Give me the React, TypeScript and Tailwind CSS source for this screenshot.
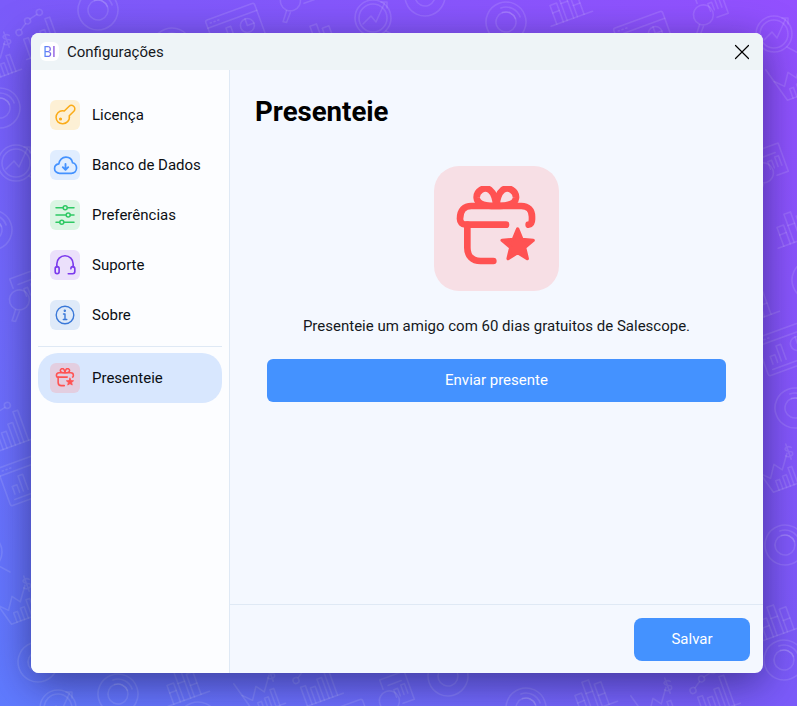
import React from "react";
import { X } from "lucide-react";

function PatternIcon({ kind }: { kind: string }) {
  if (kind === "bars") {
    return (
      <>
        <path d="M2 44H46" />
        <path d="M8 44V24H15V44M19 44V14H26V44M30 44V20H37V44" />
        <path d="M8 32H15M19 26H26M30 32H37" />
      </>
    );
  }
  if (kind === "barsLine") {
    return (
      <>
        <path d="M4 46H46" />
        <path d="M8 46V26H13V46M17 46V30H22V46M26 46V24H31V46M35 46V14H40V46" />
        <circle cx="6" cy="18" r="3" />
        <circle cx="18" cy="10" r="3" />
        <circle cx="32" cy="6" r="3" />
        <path d="M9 16L15 12M21 9L29 7" />
      </>
    );
  }
  if (kind === "donut") {
    return (
      <>
        <circle cx="24" cy="24" r="20" />
        <circle cx="24" cy="24" r="10" />
        <path d="M24 9A15 15 0 0 1 39 24M24 14A10 10 0 0 1 34 24" />
      </>
    );
  }
  if (kind === "browser") {
    return (
      <>
        <rect x="2" y="6" width="52" height="40" rx="2" />
        <path d="M2 14H54M6 10H7M10 10H11M14 10H15" />
        <path d="M10 36V28H15V36M19 36V20H24V36" />
        <circle cx="40" cy="25" r="7" />
        <path d="M40 18V25H47M8 41H48" />
      </>
    );
  }
  if (kind === "radar") {
    return (
      <>
        <circle cx="22" cy="24" r="18" />
        <circle cx="22" cy="24" r="14" />
        <path d="M12 30L20 22L25 28L34 8M30 8H36V14" />
        <path d="M35 37L48 44" />
      </>
    );
  }
  if (kind === "lens") {
    return (
      <>
        <path d="M16 14V4H42V34H30" />
        <path d="M22 12H36M26 26V18H30V26M34 26V16H38V26" />
        <circle cx="18" cy="27" r="10" />
        <path d="M11 35L4 44L7 46L14 38" />
      </>
    );
  }
  return (
    <>
      <path d="M4 8L14 44H46" />
      <path d="M8 22L16 30L24 18L30 26L40 12" />
      <path d="M20 44V34H24V44M28 44V32H32V44M36 44V26H40V44" />
      <path d="M46 8C44 5 38 6 40 9C42 12 47 11 45 15C43 17 39 16 38 14M42 3V19" />
    </>
  );
}

const patternItems = [
  { kind: "barsLine", x: 38, y: 32, r: -20 },
  { kind: "donut", x: 98, y: 10, r: -20 },
  { kind: "donut", x: 172, y: 48, r: -20 },
  { kind: "browser", x: 232, y: 30, r: -20 },
  { kind: "lens", x: 295, y: -4, r: -20 },
  { kind: "bars", x: 318, y: 34, r: -20 },
  { kind: "radar", x: 375, y: 18, r: 0 },
  { kind: "donut", x: 425, y: -4, r: -20 },
  { kind: "donut", x: 506, y: 22, r: -20 },
  { kind: "bars", x: 565, y: 0, r: -20 },
  { kind: "browser", x: 640, y: 38, r: -20 },
  { kind: "lens", x: 708, y: 10, r: -20 },
  { kind: "radar", x: 776, y: 34, r: 0 },
  { kind: "chart", x: -6, y: 58, r: -20 },
  { kind: "donut", x: 0, y: 108, r: -20 },
  { kind: "radar", x: 18, y: 163, r: 0 },
  { kind: "donut", x: -8, y: 230, r: -20 },
  { kind: "lens", x: 24, y: 295, r: -20 },
  { kind: "barsLine", x: 6, y: 425, r: -20 },
  { kind: "browser", x: 24, y: 478, r: -20 },
  { kind: "radar", x: -14, y: 552, r: 0 },
  { kind: "chart", x: 14, y: 602, r: -20 },
  { kind: "donut", x: 38, y: 662, r: -20 },
  { kind: "chart", x: 790, y: 78, r: -20 },
  { kind: "lens", x: 768, y: 168, r: -20 },
  { kind: "bars", x: 792, y: 222, r: -20 },
  { kind: "donut", x: 812, y: 280, r: -20 },
  { kind: "bars", x: 752, y: 300, r: -20 },
  { kind: "browser", x: 782, y: 348, r: -20 },
  { kind: "donut", x: 795, y: 408, r: -20 },
  { kind: "chart", x: 776, y: 470, r: -20 },
  { kind: "donut", x: 785, y: 545, r: -20 },
  { kind: "bars", x: 775, y: 615, r: -20 },
  { kind: "donut", x: 784, y: 660, r: -20 },
  { kind: "radar", x: 60, y: 708, r: 0 },
  { kind: "donut", x: 118, y: 694, r: -20 },
  { kind: "bars", x: 182, y: 680, r: -20 },
  { kind: "donut", x: 198, y: 722, r: -20 },
  { kind: "chart", x: 258, y: 692, r: -20 },
  { kind: "barsLine", x: 315, y: 680, r: -20 },
  { kind: "browser", x: 340, y: 726, r: -20 },
  { kind: "lens", x: 394, y: 696, r: -20 },
  { kind: "donut", x: 448, y: 676, r: -20 },
  { kind: "donut", x: 526, y: 708, r: -20 },
  { kind: "bars", x: 590, y: 690, r: -20 },
  { kind: "chart", x: 655, y: 704, r: -20 },
  { kind: "barsLine", x: 712, y: 690, r: -20 },
];

function Backdrop() {
  return (
    <svg
      className="absolute inset-0"
      width="797"
      height="706"
      fill="none"
      stroke="#ffffff"
      strokeOpacity="0.12"
      strokeWidth="1.6"
      strokeLinecap="round"
      strokeLinejoin="round"
    >
      {patternItems.map((item, i) => (
        <g key={i} transform={`translate(${item.x} ${item.y}) rotate(${item.r}) translate(-24 -24)`}>
          <PatternIcon kind={item.kind} />
        </g>
      ))}
    </svg>
  );
}

function KeyIcon() {
  return (
    <svg width="26" height="26" viewBox="0 -1 22 22" fill="none" stroke="#fbab18" strokeWidth="1.3" strokeLinecap="round" strokeLinejoin="round">
      <path d="M10.4 6.6L14.3 2.8C15.4 1.7 17.1 1.6 18.3 2.6C19.6 3.7 19.6 5.6 18.5 6.8L14.6 10.7C15 12.4 14.5 14.2 13.2 15.6C11 17.8 7.4 17.9 5.2 16C2.9 13.9 2.9 10.3 5 8.1C6.4 6.6 8.5 6 10.4 6.6Z" />
      <circle cx="7.2" cy="13.4" r="0.7" fill="#fbab18" />
    </svg>
  );
}

function CloudIcon() {
  return (
    <svg width="25" height="25" viewBox="0 0 24 24" fill="none" stroke="#4492ff" strokeWidth="1.6" strokeLinecap="round" strokeLinejoin="round">
      <path d="M7 19.5H6.4C3.6 19.5 1.5 17.5 1.5 15C1.5 12.6 3.3 10.8 5.6 10.5C6 6.9 8.8 4 12.4 4C15.6 4 18.2 6.3 18.8 9.4C21 10 22.6 12 22.6 14.5C22.6 17.3 20.4 19.5 17.6 19.5H7Z" />
      <path d="M12 10.5V16M9.4 13.6L12 16.2L14.6 13.6" strokeWidth="1.8" />
    </svg>
  );
}

function SlidersIcon() {
  return (
    <svg width="20" height="20" viewBox="0 0 20 20" fill="none" stroke="#2fc964" strokeWidth="1.5" strokeLinecap="round">
      <path d="M1 2.8H8M12.5 2.8H19M1 10H11M15.5 10H19M1 17.2H4.5M9 17.2H19" />
      <circle cx="10.2" cy="2.8" r="2" />
      <circle cx="13.2" cy="10" r="2" />
      <circle cx="6.8" cy="17.2" r="2" />
    </svg>
  );
}

function HeadsetIcon() {
  return (
    <svg width="24" height="24" viewBox="0 0 22 22" fill="none" stroke="#7c3aed" strokeWidth="1.5" strokeLinecap="round" strokeLinejoin="round">
      <path d="M3.5 13V10C3.5 5.8 6.8 2.5 11 2.5C15.2 2.5 18.5 5.8 18.5 10V13" />
      <rect x="2" y="12.5" width="3.6" height="6.5" rx="1.8" />
      <path d="M16.4 14.5C16.4 13.4 17 12.5 18 12.5C19.2 12.5 20 13.4 20 14.5V17C20 18.2 19.2 19 18 19H14" />
    </svg>
  );
}

function InfoIcon() {
  return (
    <svg width="22" height="22" viewBox="0 0 22 22" fill="none" stroke="#3a78d8" strokeWidth="1.4" strokeLinecap="round" strokeLinejoin="round">
      <circle cx="11" cy="11" r="8.8" />
      <path d="M9.5 10H11V15.5M9.3 15.5H12.8" />
      <circle cx="10.8" cy="6.8" r="0.5" fill="#3a78d8" />
    </svg>
  );
}

function GiftIcon({ size }: { size: number }) {
  return (
    <svg width={size} height={size} viewBox="60 60 255 255" fill="none" stroke="#ff5252" strokeWidth="20" strokeLinecap="round" strokeLinejoin="round">
      <path d="M216 176H96C84 176 78 168 78 158C78 132 92 120 112 120H262C282 120 294 132 294 152V160C294 170 290 176 284 176" />
      <path d="M100 176V245C100 270 115 285 140 285H178" />
      <path d="M187 120C172 120 130 120 128 95C127 75 150 60 168 72C178 80 185 100 187 120C189 100 196 80 206 72C224 60 247 75 246 95C244 120 202 120 187 120Z" />
      <path
        d="M251 189L263.9 220.2L297.6 222.9L271.9 244.8L279.8 277.6L251 260L222.2 277.6L230.1 244.8L204.4 222.9L238.1 220.2Z"
        fill="#ff5252"
        strokeWidth="10"
      />
    </svg>
  );
}

const menuItems = [
  { label: "Licença", box: "bg-[#fdf0d5]", icon: <KeyIcon /> },
  { label: "Banco de Dados", box: "bg-[#e0edff]", icon: <CloudIcon /> },
  { label: "Preferências", box: "bg-[#dbf5e3]", icon: <SlidersIcon /> },
  { label: "Suporte", box: "bg-[#ebe0fb]", icon: <HeadsetIcon /> },
  { label: "Sobre", box: "bg-[#dfeaf9]", icon: <InfoIcon /> },
];

function MenuRow({ label, box, icon, active }: { label: string; box: string; icon: React.ReactNode; active?: boolean }) {
  return (
    <div className={`flex h-[50px] items-center gap-3 rounded-[20px] px-3 ${active ? "bg-[#d8e7fe]" : ""}`}>
      <div className={`flex h-[30px] w-[30px] items-center justify-center rounded-md ${box}`}>{icon}</div>
      <span className="text-[15px] leading-[20px] text-[#0b0f14]">{label}</span>
    </div>
  );
}

export default function App() {
  return (
    <div className="relative h-[706px] w-[797px] overflow-hidden bg-gradient-to-tr from-[#5f7bff] via-[#7b5bfa] to-[#9350ff] font-['Roboto',sans-serif]">
      <Backdrop />
      <div className="relative pl-[31px] pt-[33px]">
        <div className="flex h-[640px] w-[732px] flex-col overflow-hidden rounded-lg bg-[#f4f8ff] shadow-[0_10px_40px_rgba(20,20,70,0.55)]">
          <div className="flex h-[37px] items-center justify-between bg-[#eef4f7] pl-[9px] pr-[8px]">
            <div className="flex items-center gap-2">
              <div className="flex h-[19px] w-[19px] items-center justify-center rounded-md bg-white">
                <span className="bg-gradient-to-r from-[#4492ff] to-[#8a3fd8] bg-clip-text text-[14px] leading-none text-transparent">BI</span>
              </div>
              <span className="text-[15px] leading-[20px] text-[#15191d]">Configurações</span>
            </div>
            <X size={26} strokeWidth={1.1} className="text-black" />
          </div>

          <div className="flex min-h-0 flex-1">
            <aside className="w-[199px] border-r border-[#dfe9f5] bg-[#fcfdff] px-[7px] pt-5">
              <div className="w-[184px]">
                {menuItems.map((item) => (
                  <MenuRow key={item.label} label={item.label} box={item.box} icon={item.icon} />
                ))}
                <div className="mb-[6px] mt-[6px] h-px bg-[#dfe9f5]" />
                <MenuRow label="Presenteie" box="bg-[#e3cee0]" icon={<GiftIcon size={20} />} active />
              </div>
            </aside>

            <main className="flex flex-1 flex-col">
              <div className="flex-1 px-[25px] pt-6">
                <h1 className="text-[27.6px] font-bold leading-[36px] text-black">Presenteie</h1>
                <div className="mx-auto mt-[36px] flex h-[125px] w-[125px] items-center justify-center rounded-[25px] bg-[#f7dfe5]">
                  <GiftIcon size={85} />
                </div>
                <p className="mt-[25px] text-center text-[15px] leading-[20px] text-[#15191d]">
                  Presenteie um amigo com 60 dias gratuitos de Salescope.
                </p>
                <button className="mx-auto mt-[23px] block h-[43px] w-[459px] rounded-md bg-[#4492ff] text-[15px] font-[450] text-white">
                  Enviar presente
                </button>
              </div>
              <div className="flex h-[69px] items-center justify-end border-t border-[#dfe9f5] pr-[13px]">
                <button className="h-[43px] w-[116px] rounded-lg bg-[#4492ff] text-[15px] font-[450] text-white">Salvar</button>
              </div>
            </main>
          </div>
        </div>
      </div>
    </div>
  );
}
